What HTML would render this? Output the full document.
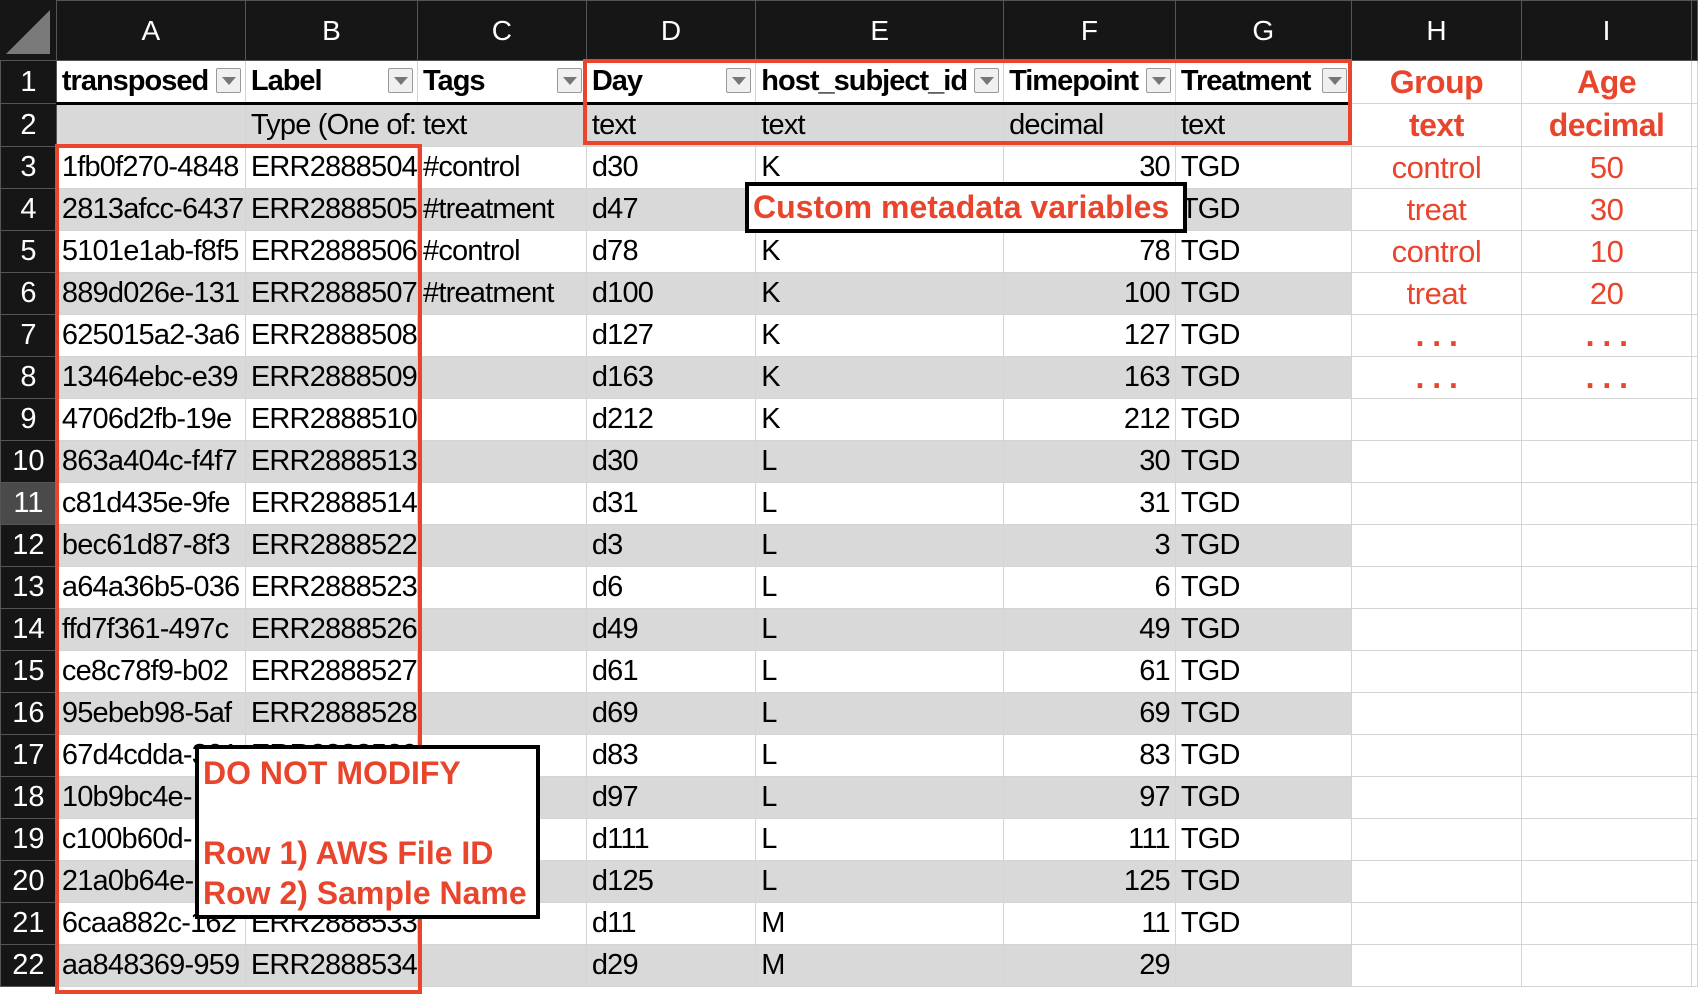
<!DOCTYPE html>
<html style="overflow:hidden;height:994px"><head><meta charset="utf-8">
<style>
body{margin:0;width:1698px;height:994px;overflow:hidden;background:#fff;font-family:"Liberation Sans",sans-serif;position:relative}
table{border-collapse:collapse;table-layout:fixed;position:absolute;left:0;top:0}
td{border:1px solid #d4d4d4;height:42px;padding:0 0 0 5px;font-size:29px;letter-spacing:-0.8px;white-space:nowrap;overflow:hidden;color:#000;box-sizing:border-box;line-height:41px}
tr.hd td{background:#161616;color:#fff;text-align:center;height:60px;border-color:#555;font-size:28px;padding:0;letter-spacing:0}
td.rh{background:#161616;color:#fff;text-align:center;border-color:#555;padding:0;letter-spacing:0}
td.sel{background:#4a4a4a}
tr.g td.b{background:#d9d9d9}
tr.r1 td.b{font-weight:bold;border-bottom:3px solid #000;position:relative;letter-spacing:-1px}
.r{text-align:right;padding-right:5px}
.red{color:#e8452c;text-align:center;padding:0;font-size:31px;letter-spacing:-0.5px}
.rb{font-weight:bold;font-size:32px}
.dd{position:absolute;right:4px;top:7px;width:25px;height:25px;border:1px solid #999;background:#f0f0f0;border-radius:2px;box-sizing:border-box}
.dd:after{content:"";position:absolute;left:5px;top:8px;border-left:7px solid transparent;border-right:7px solid transparent;border-top:8px solid #777}
.corner{position:absolute;left:0;top:0;width:56px;height:60px;background:#161616}
.corner:after{content:"";position:absolute;right:6px;bottom:6px;border-left:44px solid transparent;border-bottom:44px solid #7a7a7a}
.box{position:absolute;box-sizing:border-box}
</style></head><body>
<table>
<colgroup><col style="width:56px"><col style="width:189px"><col style="width:171px"><col style="width:169px"><col style="width:170px"><col style="width:248px"><col style="width:172px"><col style="width:176px"><col style="width:171px"><col style="width:170px"><col style="width:6px"></colgroup>
<tr class="hd"><td></td><td>A</td><td>B</td><td>C</td><td>D</td><td>E</td><td>F</td><td>G</td><td>H</td><td>I</td><td></td></tr>
<tr class="r1"><td class="rh">1</td><td class="b">transposed<div class="dd"></div></td><td class="b">Label<div class="dd"></div></td><td class="b">Tags<div class="dd"></div></td><td class="b">Day<div class="dd"></div></td><td class="b">host_subject_id<div class="dd"></div></td><td class="b">Timepoint<div class="dd"></div></td><td class="b">Treatment<div class="dd"></div></td><td class="red rb">Group</td><td class="red rb">Age</td><td></td></tr>
<tr class="g"><td class="rh">2</td><td class="b"></td><td class="b">Type (One of:</td><td class="b">text</td><td class="b">text</td><td class="b">text</td><td class="b">decimal</td><td class="b">text</td><td class="red rb">text</td><td class="red rb">decimal</td><td></td></tr>
<tr><td class="rh">3</td><td class="b">1fb0f270-4848</td><td class="b">ERR2888504</td><td class="b">#control</td><td class="b">d30</td><td class="b">K</td><td class="b r">30</td><td class="b">TGD</td><td class="red">control</td><td class="red">50</td><td></td></tr>
<tr class="g"><td class="rh">4</td><td class="b">2813afcc-6437</td><td class="b">ERR2888505</td><td class="b">#treatment</td><td class="b">d47</td><td class="b">K</td><td class="b r">47</td><td class="b">TGD</td><td class="red">treat</td><td class="red">30</td><td></td></tr>
<tr><td class="rh">5</td><td class="b">5101e1ab-f8f5</td><td class="b">ERR2888506</td><td class="b">#control</td><td class="b">d78</td><td class="b">K</td><td class="b r">78</td><td class="b">TGD</td><td class="red">control</td><td class="red">10</td><td></td></tr>
<tr class="g"><td class="rh">6</td><td class="b">889d026e-131</td><td class="b">ERR2888507</td><td class="b">#treatment</td><td class="b">d100</td><td class="b">K</td><td class="b r">100</td><td class="b">TGD</td><td class="red">treat</td><td class="red">20</td><td></td></tr>
<tr><td class="rh">7</td><td class="b">625015a2-3a6</td><td class="b">ERR2888508</td><td class="b"></td><td class="b">d127</td><td class="b">K</td><td class="b r">127</td><td class="b">TGD</td><td class="red rb">. . .</td><td class="red rb">. . .</td><td></td></tr>
<tr class="g"><td class="rh">8</td><td class="b">13464ebc-e39</td><td class="b">ERR2888509</td><td class="b"></td><td class="b">d163</td><td class="b">K</td><td class="b r">163</td><td class="b">TGD</td><td class="red rb">. . .</td><td class="red rb">. . .</td><td></td></tr>
<tr><td class="rh">9</td><td class="b">4706d2fb-19e</td><td class="b">ERR2888510</td><td class="b"></td><td class="b">d212</td><td class="b">K</td><td class="b r">212</td><td class="b">TGD</td><td></td><td></td><td></td></tr>
<tr class="g"><td class="rh">10</td><td class="b">863a404c-f4f7</td><td class="b">ERR2888513</td><td class="b"></td><td class="b">d30</td><td class="b">L</td><td class="b r">30</td><td class="b">TGD</td><td></td><td></td><td></td></tr>
<tr><td class="rh sel">11</td><td class="b">c81d435e-9fe</td><td class="b">ERR2888514</td><td class="b"></td><td class="b">d31</td><td class="b">L</td><td class="b r">31</td><td class="b">TGD</td><td></td><td></td><td></td></tr>
<tr class="g"><td class="rh">12</td><td class="b">bec61d87-8f3</td><td class="b">ERR2888522</td><td class="b"></td><td class="b">d3</td><td class="b">L</td><td class="b r">3</td><td class="b">TGD</td><td></td><td></td><td></td></tr>
<tr><td class="rh">13</td><td class="b">a64a36b5-036</td><td class="b">ERR2888523</td><td class="b"></td><td class="b">d6</td><td class="b">L</td><td class="b r">6</td><td class="b">TGD</td><td></td><td></td><td></td></tr>
<tr class="g"><td class="rh">14</td><td class="b">ffd7f361-497c</td><td class="b">ERR2888526</td><td class="b"></td><td class="b">d49</td><td class="b">L</td><td class="b r">49</td><td class="b">TGD</td><td></td><td></td><td></td></tr>
<tr><td class="rh">15</td><td class="b">ce8c78f9-b02</td><td class="b">ERR2888527</td><td class="b"></td><td class="b">d61</td><td class="b">L</td><td class="b r">61</td><td class="b">TGD</td><td></td><td></td><td></td></tr>
<tr class="g"><td class="rh">16</td><td class="b">95ebeb98-5af</td><td class="b">ERR2888528</td><td class="b"></td><td class="b">d69</td><td class="b">L</td><td class="b r">69</td><td class="b">TGD</td><td></td><td></td><td></td></tr>
<tr><td class="rh">17</td><td class="b">67d4cdda-301</td><td class="b">ERR2888529</td><td class="b"></td><td class="b">d83</td><td class="b">L</td><td class="b r">83</td><td class="b">TGD</td><td></td><td></td><td></td></tr>
<tr class="g"><td class="rh">18</td><td class="b">10b9bc4e-</td><td class="b">ERR2888530</td><td class="b"></td><td class="b">d97</td><td class="b">L</td><td class="b r">97</td><td class="b">TGD</td><td></td><td></td><td></td></tr>
<tr><td class="rh">19</td><td class="b">c100b60d-</td><td class="b">ERR2888531</td><td class="b"></td><td class="b">d111</td><td class="b">L</td><td class="b r">111</td><td class="b">TGD</td><td></td><td></td><td></td></tr>
<tr class="g"><td class="rh">20</td><td class="b">21a0b64e-</td><td class="b">ERR2888532</td><td class="b"></td><td class="b">d125</td><td class="b">L</td><td class="b r">125</td><td class="b">TGD</td><td></td><td></td><td></td></tr>
<tr><td class="rh">21</td><td class="b">6caa882c-162</td><td class="b">ERR2888533</td><td class="b"></td><td class="b">d11</td><td class="b">M</td><td class="b r">11</td><td class="b">TGD</td><td></td><td></td><td></td></tr>
<tr class="g"><td class="rh">22</td><td class="b">aa848369-959</td><td class="b">ERR2888534</td><td class="b"></td><td class="b">d29</td><td class="b">M</td><td class="b r">29</td><td class="b"></td><td></td><td></td><td></td></tr>
</table>
<div class="corner"></div>
<div class="box" style="left:583px;top:59px;width:769px;height:86px;border:4px solid #e8452c"></div>
<div class="box" style="left:55px;top:144px;width:367px;height:850px;border:4px solid #e8452c;border-bottom-width:4px"></div>
<div class="box" style="left:745px;top:182px;width:442px;height:51px;border:4px solid #000;background:#fff;color:#e8452c;font-weight:bold;font-size:32px;line-height:42px;padding-left:4px;white-space:nowrap">Custom metadata variables</div>
<div class="box" style="left:195px;top:745px;width:345px;height:174px;border:4px solid #000;background:#fff;color:#e8452c;font-weight:bold;font-size:32px;line-height:40px;padding:4px 0 0 4px;white-space:nowrap">DO NOT MODIFY<br><br>Row 1) AWS File ID<br>Row 2) Sample Name</div>
</body></html>
